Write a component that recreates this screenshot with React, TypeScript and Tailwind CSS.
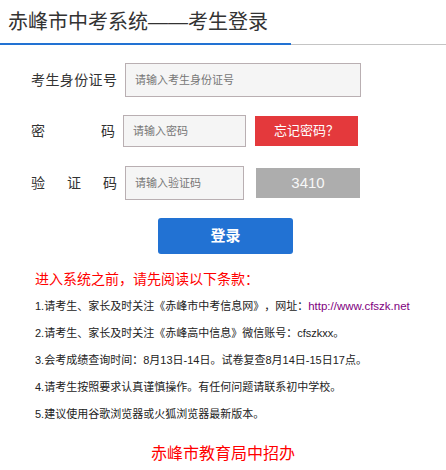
const FONT = { fontFamily: '"Liberation Sans", "Noto Sans CJK SC", sans-serif' };

function Label({ chars, width }: { chars: string[]; width: string }) {
  return (
    <div className={`flex justify-between text-[14px] text-[#333] ${width}`}>
      {chars.map((c, i) => (
        <span key={i}>{c}</span>
      ))}
    </div>
  );
}

const inputCls =
  "border border-[#b9afb2] bg-[#f5f5f5] px-[9px] text-[11px] text-[#333] outline-none placeholder:text-[#777]";

const notes = [
  <>
    1.请考生、家长及时关注《赤峰市中考信息网》，网址：
    <a className="text-[11.5px] text-[#800080]" href="#">
      http://www.cfszk.net
    </a>
  </>,
  <>2.请考生、家长及时关注《赤峰高中信息》微信账号：cfszkxx。</>,
  <>3.会考成绩查询时间：8月13日-14日。试卷复查8月14日-15日17点。</>,
  <>4.请考生按照要求认真谨慎操作。有任何问题请联系初中学校。</>,
  <>5.建议使用谷歌浏览器或火狐浏览器最新版本。</>,
];

export default function App() {
  return (
    <div
      lang="zh-CN"
      className="h-[470px] w-[446px] overflow-hidden bg-white [text-spacing-trim:space-all]"
      style={FONT}
    >
      {/* header */}
      <div className="h-[43px] pl-[8px] pt-[8px] text-[20px] leading-[28px] text-[#333]">
        赤峰市中考系统——考生登录
      </div>
      <div className="flex items-end">
        <div className="h-[2px] w-[291px] bg-[#2272d3]" />
        <div className="h-px flex-1 bg-[#c4c4c4]" />
      </div>

      {/* form */}
      <div className="mt-[18px] flex h-[34px] items-center pl-[31px]">
        <Label chars={["考", "生", "身", "份", "证", "号"]} width="w-[86px]" />
        <input className={`ml-[8px] h-[34px] w-[236px] ${inputCls}`} placeholder="请输入考生身份证号" />
      </div>

      <div className="mt-[18px] flex h-[32px] items-center pl-[31px]">
        <Label chars={["密", "码"]} width="w-[84px]" />
        <input className={`ml-[8px] h-[32px] w-[123px] ${inputCls}`} placeholder="请输入密码" />
        <button className="ml-[9px] flex h-[30px] w-[103px] items-center justify-center bg-[#e4393c] text-[13px] text-white">
          忘记密码？
        </button>
      </div>

      <div className="mt-[19px] flex h-[34px] items-center pl-[31px]">
        <Label chars={["验", "证", "码"]} width="w-[86px]" />
        <input className={`ml-[8px] h-[34px] w-[119px] ${inputCls}`} placeholder="请输入验证码" />
        <div className="ml-[12px] flex h-[30px] w-[104px] items-center justify-center bg-[#adadad] text-[15px] text-[#f7f7f7]">
          3410
        </div>
      </div>

      <button className="ml-[158px] mt-[18px] flex h-[36px] w-[135px] items-center justify-center rounded-[3px] bg-[#2272d3] text-[15px] font-bold text-white">
        登录
      </button>

      {/* notes */}
      <div className="mt-[15px] pl-[35px] text-[14px] leading-[20px] text-[#ff0000]">
        进入系统之前，请先阅读以下条款：
      </div>
      <div className="mt-[4px] pl-[35px] text-[11px] text-[#222]">
        {notes.map((n, i) => (
          <div key={i} className="h-[27px] leading-[27px] whitespace-nowrap">
            {n}
          </div>
        ))}
      </div>

      <div className="mt-[14px] text-center text-[16px] leading-[24px] text-[#ff0000]">
        赤峰市教育局中招办
      </div>
    </div>
  );
}
